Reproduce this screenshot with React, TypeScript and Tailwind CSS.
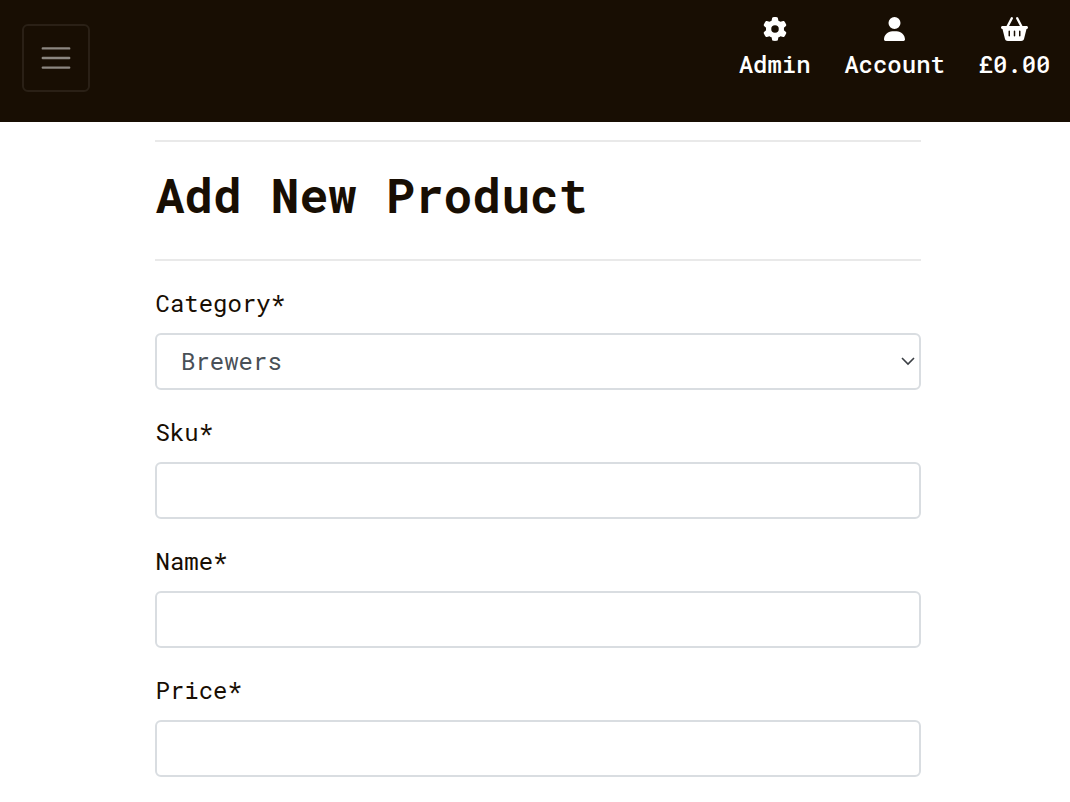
import type { IconType } from "react-icons";
import { FaBasketShopping, FaGear, FaUser } from "react-icons/fa6";

function NavItem({ icon: Icon, label, iconClass }: { icon: IconType; label: string; iconClass: string }) {
  return (
    <a href="#" className="flex flex-col items-center text-white">
      <Icon className={iconClass} />
      <span className="mt-[5px] text-[24px] leading-9 font-medium">{label}</span>
    </a>
  );
}

const inputClass =
  "block h-[57px] w-full appearance-none rounded-[6px] border-2 border-[#d9dde1] bg-white pr-6 pb-0.5 pl-6 text-[24px] text-[#495057] outline-none";

const labelClass = "mb-3 block h-9 pl-[0.5px] leading-9";

function TextField({ label }: { label: string }) {
  return (
    <div className="mb-6">
      <label className={labelClass}>{label}</label>
      <input className={inputClass} type="text" aria-label={label} />
    </div>
  );
}

export default function App() {
  return (
    <div className="h-[802px] overflow-hidden bg-white font-['Roboto_Mono','Liberation_Mono',monospace] text-[24px] text-[#180e03]">
      <header className="flex h-[122px] items-start justify-between bg-[#180e03] pr-[19.5px] pl-[22px]">
        <button
          type="button"
          aria-label="Menu"
          className="mt-6 flex size-[68px] items-center justify-center rounded-[6px] border-2 border-white/8"
        >
          <svg viewBox="0 0 30 30" className="size-9" fill="none">
            <path d="M4 7h22M4 15h22M4 23h22" stroke="white" strokeOpacity="0.5" strokeWidth="2" strokeLinecap="round" />
          </svg>
        </button>
        <nav className="flex gap-[33.5px] pt-[17px]">
          <NavItem icon={FaGear} label="Admin" iconClass="block h-6 w-6" />
          <NavItem icon={FaUser} label="Account" iconClass="block h-6 w-[21px]" />
          <NavItem icon={FaBasketShopping} label="£0.00" iconClass="block h-6 w-[27px]" />
        </nav>
      </header>
      <main className="ml-[155px] w-[766px] pt-[18px]">
        <hr className="border-t-2 border-[#e9e9e9]" />
        <h1 className="mt-6 mb-9 h-[57px] pl-[0.5px] text-[48px] leading-[57px] font-bold">Add New Product</h1>
        <hr className="border-t-2 border-[#e9e9e9]" />
        <form className="mt-6">
          <div className="mb-6">
            <label className={labelClass}>Category*</label>
            <div className="relative">
              <select className={inputClass} aria-label="Category">
                <option>Brewers</option>
              </select>
              <svg viewBox="0 0 14 9" className="pointer-events-none absolute top-6 right-1.5 h-[9px] w-[14px]" fill="none">
                <path d="M1 1l6 6 6-6" stroke="#3b3f44" strokeWidth="1.6" />
              </svg>
            </div>
          </div>
          <TextField label="Sku*" />
          <TextField label="Name*" />
          <TextField label="Price*" />
        </form>
      </main>
    </div>
  );
}
